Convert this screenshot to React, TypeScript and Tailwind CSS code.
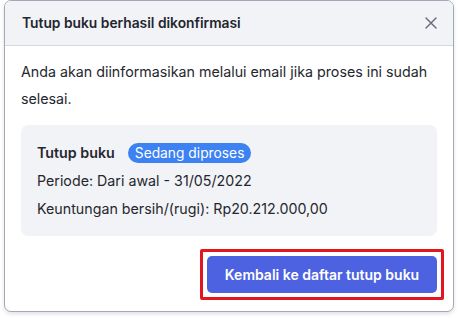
import React from 'react';

export default function App() {
  return (
    <div className="min-h-[318px] w-[459px] bg-white pl-[4px]" style={{ fontFamily: 'Inter, "Noto Sans", sans-serif' }}>
      <div className="w-[450px] h-[312px] rounded-[7px] border border-[#a3a9b8] bg-white overflow-hidden shadow-[0_2px_4px_rgba(0,0,0,0.12)] flex flex-col">
        <div className="h-[45px] shrink-0 flex items-center justify-between border-b border-[#d3d7df] bg-[#f2f3f7] pl-[17px] pr-[15px]">
          <h2 className="text-[13.8px] font-semibold text-[#22252d]">Tutup buku berhasil dikonfirmasi</h2>
          <button className="text-[#6b7080]">
            <svg width="14" height="14" viewBox="0 0 14 14" fill="none" stroke="currentColor" strokeWidth="1.5" strokeLinecap="round">
              <path d="M2 2L12 12M12 2L2 12" />
            </svg>
          </button>
        </div>
        <div className="flex flex-col pl-[16px] pr-[16px] pt-[12px]">
          <p className="text-[14.25px] leading-[27px] text-[#25272e]">
            Anda akan diinformasikan melalui email jika proses ini sudah selesai.
          </p>
          <div className="mt-[13px] rounded-[7px] bg-[#f2f3f7] px-[16px] pt-[14px] pb-[13px] text-[14.25px] leading-[28px] text-[#25272e]">
            <div className="flex items-center gap-[13px]">
              <span className="font-semibold">Tutup buku</span>
              <span className="h-[20px] rounded-full bg-[#3d82f2] px-[7px] text-[13.8px] leading-[20px] text-white">Sedang diproses</span>
            </div>
            <div>Periode: Dari awal - 31/05/2022</div>
            <div>Keuntungan bersih/(rugi): Rp20.212.000,00</div>
          </div>
          <div className="mt-[13px] flex justify-end mr-[-7px]">
            <div className="rounded-[2px] border-[3px] border-[#e3151f] p-[4px]">
              <button className="h-[37px] w-[230px] rounded-[5px] bg-[#4d62e0] text-[14px] font-semibold text-white">
                Kembali ke daftar tutup buku
              </button>
            </div>
          </div>
        </div>
      </div>
    </div>
  );
}
